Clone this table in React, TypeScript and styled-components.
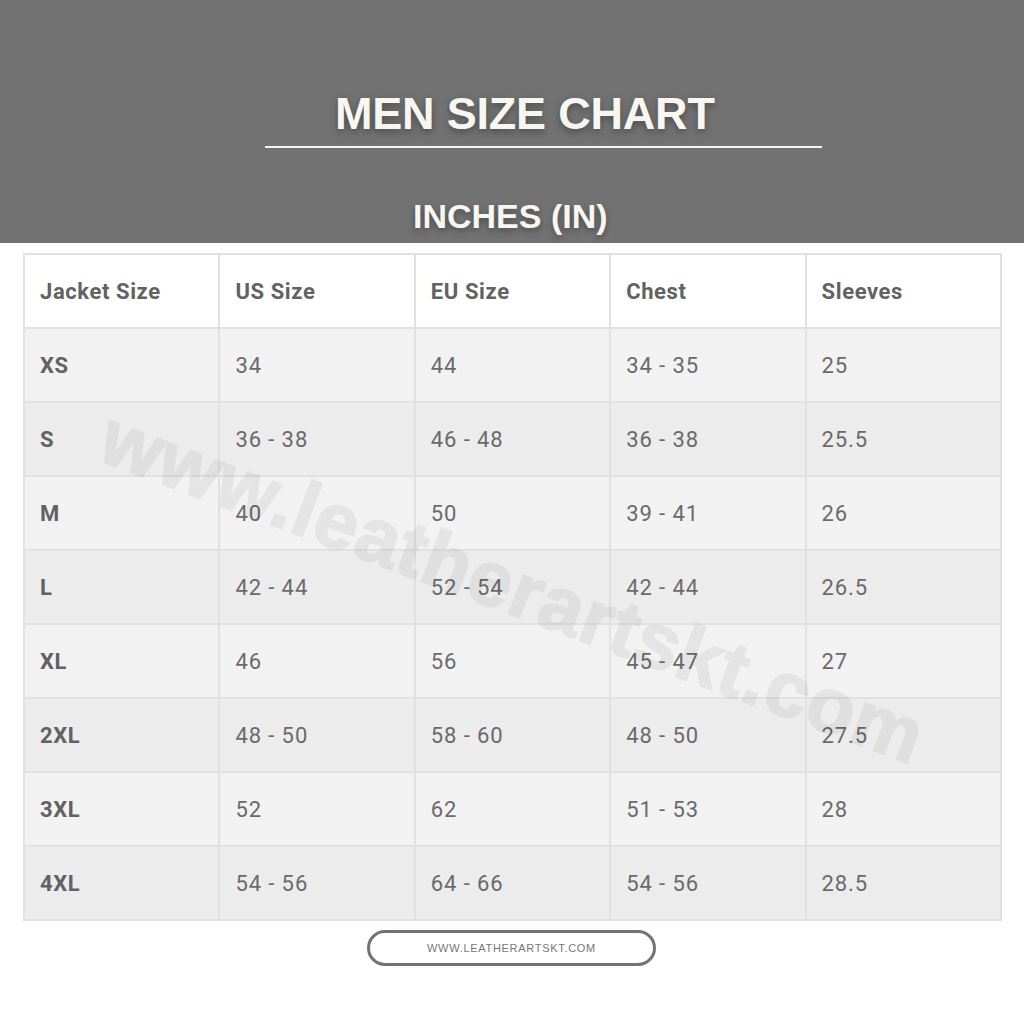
import React from "react";
import styled, { createGlobalStyle } from "styled-components";

const Global = createGlobalStyle`
  html, body { margin: 0; padding: 0; background: #ffffff; }
  body { width: 1024px; height: 1024px; overflow: hidden; }
`;

const Page = styled.div`
  width: 1024px;
  height: 1024px;
  background: #ffffff;
  display: flex;
  flex-direction: column;
`;

const Header = styled.header`
  height: 243px;
  background: #727272;
  display: flex;
  flex-direction: column;
  align-items: flex-start;
  padding-top: 91px;
  box-sizing: border-box;
`;

const Title = styled.h1`
  margin: 0 0 0 335px;
  font-family: "Liberation Sans", Arial, sans-serif;
  font-weight: 700;
  font-size: 45px;
  line-height: 45px;
  letter-spacing: -0.2px;
  color: #f8f6f1;
  text-shadow: 0 3px 7px rgba(0, 0, 0, 0.35);
`;

const Rule = styled.div`
  margin: 10px 0 0 265px;
  width: 557px;
  height: 2px;
  background: #f4f4f4;
`;

const Subtitle = styled.h2`
  margin: 51px 0 0 413px;
  font-family: "Liberation Sans", Arial, sans-serif;
  font-weight: 700;
  font-size: 34px;
  line-height: 34px;
  color: #f8f6f1;
  text-shadow: 0 3px 6px rgba(0, 0, 0, 0.35);
`;

const TableWrap = styled.div`
  position: relative;
  margin: 10px 0 0 23px;
  width: 979px;
  overflow: hidden;
`;

const Grid = styled.div`
  display: grid;
  grid-template-columns: repeat(5, 1fr);
  grid-auto-rows: 74px;
  border-top: 2px solid #e1e1e1;
  border-left: 2px solid #e1e1e1;
  box-sizing: border-box;
`;

const Cell = styled.div<{ $bg: string; $bold?: boolean }>`
  box-sizing: border-box;
  display: flex;
  align-items: center;
  padding-left: 15px;
  background: ${(p) => p.$bg};
  border-right: 2px solid #e1e1e1;
  border-bottom: 2px solid #e1e1e1;
  font-family: Roboto, "Liberation Sans", sans-serif;
  font-size: 22px;
  letter-spacing: ${(p) => (p.$bold ? "0.6px" : "0.9px")};
  font-weight: ${(p) => (p.$bold ? 700 : 400)};
  color: ${(p) => (p.$bold ? "#626262" : "#6a6a6a")};
`;

const Watermark = styled.div`
  position: absolute;
  left: 50%;
  top: 50%;
  transform: translate(-50%, -50%) rotate(20.5deg);
  white-space: nowrap;
  font-family: "Liberation Sans", Arial, sans-serif;
  font-weight: 700;
  font-size: 78px;
  letter-spacing: 1px;
  color: #000000;
  -webkit-text-stroke: 2px #000000;
  opacity: 0.05;
  pointer-events: none;
`;

const Pill = styled.div`
  margin: 9px 0 0 367px;
  width: 289px;
  height: 36px;
  box-sizing: border-box;
  border: 3px solid #737373;
  border-radius: 18px;
  display: flex;
  align-items: center;
  justify-content: center;
  font-family: "Liberation Sans", Arial, sans-serif;
  font-size: 11px;
  letter-spacing: 0.7px;
  color: #777777;
`;

const headers = ["Jacket Size", "US Size", "EU Size", "Chest", "Sleeves"];
const rows: string[][] = [
  ["XS", "34", "44", "34 - 35", "25"],
  ["S", "36 - 38", "46 - 48", "36 - 38", "25.5"],
  ["M", "40", "50", "39 - 41", "26"],
  ["L", "42 - 44", "52 - 54", "42 - 44", "26.5"],
  ["XL", "46", "56", "45 - 47", "27"],
  ["2XL", "48 - 50", "58 - 60", "48 - 50", "27.5"],
  ["3XL", "52", "62", "51 - 53", "28"],
  ["4XL", "54 - 56", "64 - 66", "54 - 56", "28.5"],
];

export default function App() {
  return (
    <Page>
      <Global />
      <Header>
        <Title>MEN SIZE CHART</Title>
        <Rule />
        <Subtitle>INCHES (IN)</Subtitle>
      </Header>
      <TableWrap>
        <Grid>
          {headers.map((h) => (
            <Cell key={h} $bg="#ffffff" $bold>
              {h}
            </Cell>
          ))}
          {rows.map((r, i) =>
            r.map((c, j) => (
              <Cell
                key={`${i}-${j}`}
                $bg={i % 2 === 0 ? "#f2f2f2" : "#ececec"}
                $bold={j === 0}
              >
                {c}
              </Cell>
            ))
          )}
        </Grid>
        <Watermark>www.leatherartskt.com</Watermark>
      </TableWrap>
      <Pill>WWW.LEATHERARTSKT.COM</Pill>
    </Page>
  );
}
